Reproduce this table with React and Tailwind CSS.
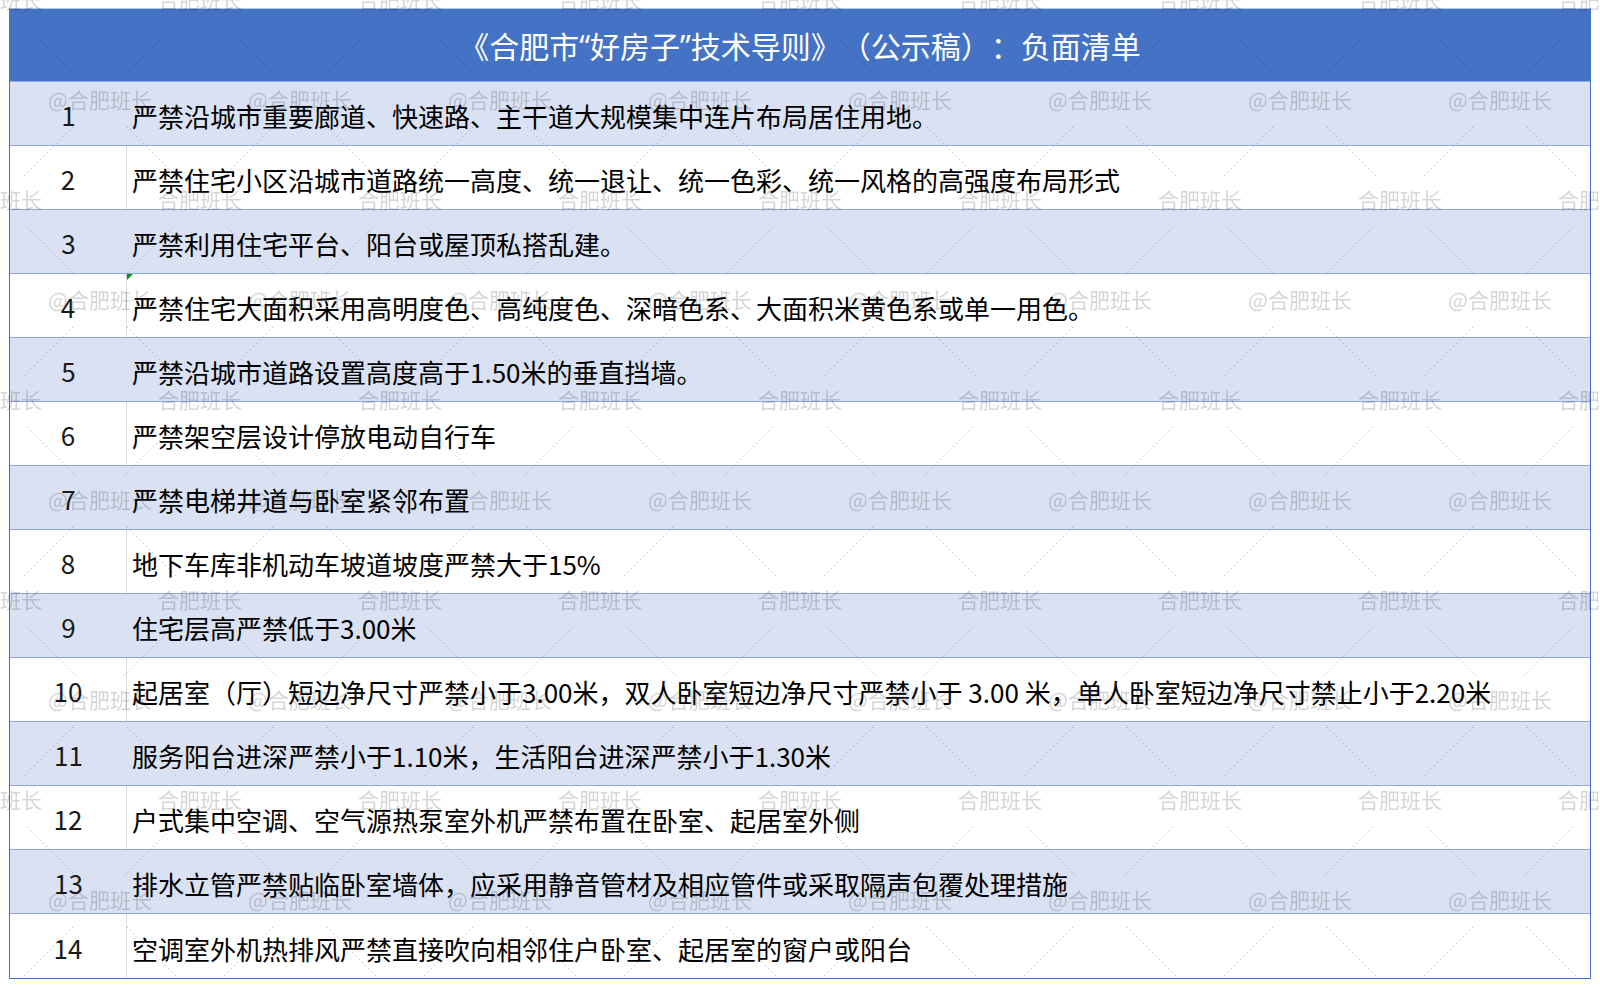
import React from "react";

const rows = [
  "严禁沿城市重要廊道、快速路、主干道大规模集中连片布局居住用地。",
  "严禁住宅小区沿城市道路统一高度、统一退让、统一色彩、统一风格的高强度布局形式",
  "严禁利用住宅平台、阳台或屋顶私搭乱建。",
  "严禁住宅大面积采用高明度色、高纯度色、深暗色系、大面积米黄色系或单一用色。",
  "严禁沿城市道路设置高度高于1.50米的垂直挡墙。",
  "严禁架空层设计停放电动自行车",
  "严禁电梯井道与卧室紧邻布置",
  "地下车库非机动车坡道坡度严禁大于15%",
  "住宅层高严禁低于3.00米",
  "起居室（厅）短边净尺寸严禁小于3.00米，双人卧室短边净尺寸严禁小于 3.00 米，单人卧室短边净尺寸禁止小于2.20米",
  "服务阳台进深严禁小于1.10米，生活阳台进深严禁小于1.30米",
  "户式集中空调、空气源热泵室外机严禁布置在卧室、起居室外侧",
  "排水立管严禁贴临卧室墙体，应采用静音管材及相应管件或采取隔声包覆处理措施",
  "空调室外机热排风严禁直接吹向相邻住户卧室、起居室的窗户或阳台",
];

function Watermark() {
  const corners = [
    [0, 0],
    [200, 0],
    [0, 200],
    [200, 200],
  ];
  // middle part of each diagonal between two watermark points
  const segs = [
    [27, 27, 77, 77],
    [127, 127, 177, 177],
    [173, 27, 123, 77],
    [73, 127, 23, 177],
  ];
  return (
    <svg className="pointer-events-none absolute inset-0" width="1600" height="987">
      <defs>
        <pattern id="wm" width="200" height="200" patternUnits="userSpaceOnUse">
          {segs.map((s, i) => (
            <line
              key={i}
              x1={s[0]}
              y1={s[1]}
              x2={s[2]}
              y2={s[3]}
              stroke="rgba(0,0,0,0.22)"
              strokeWidth="1"
              strokeDasharray="1.5 3"
            />
          ))}
          {corners.map(([x, y], i) => (
            <text
              key={i}
              x={x}
              y={y + 8}
              textAnchor="middle"
              fontSize="21"
              fill="rgba(0,0,0,0.17)"
              className="font-['Noto_Sans_CJK_SC',sans-serif]"
            >
              合肥班长
            </text>
          ))}
          <text
            x="100"
            y="108"
            textAnchor="middle"
            fontSize="21"
            fill="rgba(0,0,0,0.17)"
            className="font-['Noto_Sans_CJK_SC',sans-serif]"
          >
            @合肥班长
          </text>
        </pattern>
      </defs>
      <rect width="1600" height="987" fill="url(#wm)" />
    </svg>
  );
}

export default function App() {
  return (
    <div className="relative h-[987px] w-[1600px] overflow-hidden bg-white font-['Noto_Sans_CJK_SC','Noto_Sans',sans-serif] [text-spacing-trim:space-all]">
      <div className="pl-[9px] pt-[8px]">
        <div className="w-[1582px] border-x border-b border-[#4472c4] border-t border-t-[#b4c6e7]">
          <div className="flex h-[73px] items-center justify-center border-b border-[#8ea9db] bg-[#4472c4] text-[30px] text-white">
            《合肥市<span className="font-['Noto_Sans',sans-serif]">“</span>好房子
            <span className="font-['Noto_Sans',sans-serif]">”</span>技术导则》（公示稿）：负面清单
          </div>
          {rows.map((text, i) => {
            const blue = i % 2 === 0;
            return (
              <div
                key={i}
                className={`flex h-[64px] ${blue ? "bg-[#d9e1f2]" : "bg-white"} ${
                  i === rows.length - 1 ? "" : "border-b border-[#8ea9db]"
                }`}
              >
                <div
                  className={`flex w-[117px] shrink-0 items-center justify-center pt-[2px] text-[26px] text-[#1a1a1a] ${
                    blue ? "" : "border-r border-[#dadada]"
                  }`}
                >
                  {i + 1}
                </div>
                <div className="relative flex flex-1 items-center whitespace-nowrap pl-[5px] pt-[4px] text-[26px] text-black">
                  {i === 3 && (
                    <span className="absolute left-0 top-0 border-r-[6px] border-t-[6px] border-r-transparent border-t-[#0c8a1c]" />
                  )}
                  {text}
                </div>
              </div>
            );
          })}
        </div>
      </div>
      <Watermark />
    </div>
  );
}
